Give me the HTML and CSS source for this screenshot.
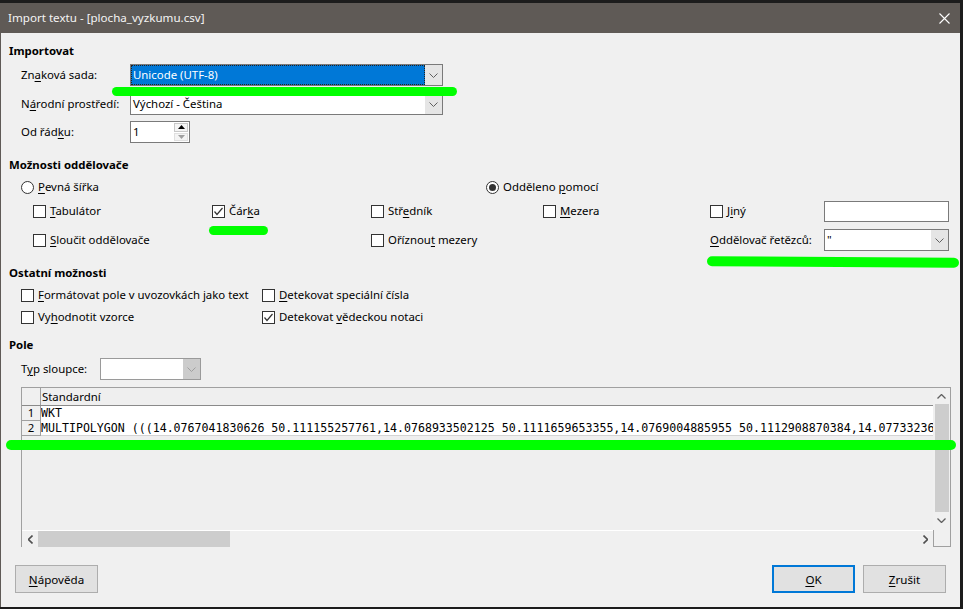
FILE: index.html
```html
<!DOCTYPE html>
<html lang="cs">
<head>
<meta charset="utf-8">
<title>Import textu</title>
<link rel="stylesheet" href="styles.css">
</head>
<body>
<div class="screen">
  <div class="window">
    <div class="titlebar">
      <span class="title">Import textu - [plocha_vyzkumu.csv]</span>
      <svg class="close" width="11" height="11" viewBox="0 0 11 11"><path d="M0.5 0.5 L10.5 10.5 M10.5 0.5 L0.5 10.5" stroke="#ffffff" stroke-width="1.1" fill="none"/></svg>
    </div>
    <div class="content">
      <div class="heading h-import">Importovat</div>
      <div class="field-row r1">
        <span class="flabel">Zn<u>a</u>ková sada:</span>
        <div class="combo combo-wide selected"><span class="combo-text">Unicode (UTF-8)</span><span class="drop"><svg width="9" height="5" viewBox="0 0 9 5"><polyline points="0.5,0.5 4.5,4.5 8.5,0.5" fill="none" stroke="#606060"/></svg></span></div>
      </div>
      <div class="field-row r2">
        <span class="flabel">N<u>á</u>rodní prostředí:</span>
        <div class="combo combo-wide"><span class="combo-text">Výchozí - Čeština</span><span class="drop"><svg width="9" height="5" viewBox="0 0 9 5"><polyline points="0.5,0.5 4.5,4.5 8.5,0.5" fill="none" stroke="#606060"/></svg></span></div>
      </div>
      <div class="field-row r3">
        <span class="flabel">Od řád<u>k</u>u:</span>
        <div class="spin"><span class="spin-text">1</span><span class="spin-btns"><span class="sb up"><svg width="7" height="4" viewBox="0 0 7 4"><polygon points="0,4 3.5,0 7,4" fill="#000"/></svg></span><span class="sb down"><svg width="7" height="4" viewBox="0 0 7 4"><polygon points="0,0 3.5,4 7,0" fill="#a0a0a0"/></svg></span></span></div>
      </div>

      <div class="heading h-sep">Možnosti oddělovače</div>
      <div class="radio-row">
        <label class="opt radio-first"><span class="radio"></span><span><u>P</u>evná šířka</span></label>
        <label class="opt"><span class="radio on"></span><span>Odděleno <u>p</u>omocí</span></label>
      </div>
      <div class="sep-grid sep-row1">
        <label class="opt"><span class="cb"></span><span><u>T</u>abulátor</span></label>
        <label class="opt"><span class="cb on"><svg width="11" height="11" viewBox="0 0 11 11"><polyline points="1.5,5.5 4,8.5 9.5,2" fill="none" stroke="#333" stroke-width="1.2"/></svg></span><span>Čár<u>k</u>a</span></label>
        <label class="opt"><span class="cb"></span><span>Stř<u>e</u>dník</span></label>
        <label class="opt"><span class="cb"></span><span><u>M</u>ezera</span></label>
        <label class="opt"><span class="cb"></span><span>J<u>i</u>ný</span></label>
        <div class="textbox"></div>
      </div>
      <div class="sep-grid sep-row2">
        <label class="opt"><span class="cb"></span><span><u>S</u>loučit oddělovače</span></label>
        <span></span>
        <label class="opt span2"><span class="cb"></span><span>Oříznou<u>t</u> mezery</span></label>
        <span class="flabel2"><u>O</u>ddělovač řetězců:</span>
        <div class="combo combo-small"><span class="combo-text">"</span><span class="drop"><svg width="9" height="5" viewBox="0 0 9 5"><polyline points="0.5,0.5 4.5,4.5 8.5,0.5" fill="none" stroke="#606060"/></svg></span></div>
      </div>

      <div class="heading h-other">Ostatní možnosti</div>
      <div class="other-grid o1">
        <label class="opt"><span class="cb"></span><span><u>F</u>ormátovat pole v uvozovkách jako text</span></label>
        <label class="opt"><span class="cb"></span><span><u>D</u>etekovat speciální čísla</span></label>
      </div>
      <div class="other-grid o2">
        <label class="opt"><span class="cb"></span><span>Vy<u>h</u>odnotit vzorce</span></label>
        <label class="opt"><span class="cb on"><svg width="11" height="11" viewBox="0 0 11 11"><polyline points="1.5,5.5 4,8.5 9.5,2" fill="none" stroke="#333" stroke-width="1.2"/></svg></span><span>Detekovat <u>v</u>ědeckou notaci</span></label>
      </div>

      <div class="heading h-pole">Pole</div>
      <div class="field-row r-typ">
        <span class="flabel-typ">T<u>y</u>p sloupce:</span>
        <div class="combo combo-typ disabled"><span class="combo-text"></span><span class="drop"><svg width="9" height="5" viewBox="0 0 9 5"><polyline points="0.5,0.5 4.5,4.5 8.5,0.5" fill="none" stroke="#a0a0a0"/></svg></span></div>
      </div>

      <div class="preview">
        <div class="table">
          <div class="trow thead"><div class="rh"></div><div class="cell">Standardní</div></div>
          <div class="trow tr1"><div class="rh">1</div><div class="cell mono">WKT</div></div>
          <div class="trow tr2"><div class="rh">2</div><div class="cell mono">MULTIPOLYGON (((14.0767041830626 50.111155257761,14.0768933502125 50.1111659653355,14.0769004885955 50.1112908870384,14.07733236</div></div>
        </div>
        <div class="vscroll">
          <span class="arr"><svg width="9" height="5" viewBox="0 0 9 5"><polyline points="0.5,4.5 4.5,0.5 8.5,4.5" fill="none" stroke="#606060" stroke-width="1.3"/></svg></span>
          <span class="vthumb"></span>
          <span class="arr"><svg width="9" height="5" viewBox="0 0 9 5"><polyline points="0.5,0.5 4.5,4.5 8.5,0.5" fill="none" stroke="#606060" stroke-width="1.3"/></svg></span>
        </div>
        <div class="hscroll">
          <span class="harr"><svg width="5" height="9" viewBox="0 0 5 9"><polyline points="4.5,0.5 0.5,4.5 4.5,8.5" fill="none" stroke="#505050" stroke-width="1.6"/></svg></span>
          <span class="hthumb"></span>
          <span class="harr right"><svg width="5" height="9" viewBox="0 0 5 9"><polyline points="0.5,0.5 4.5,4.5 0.5,8.5" fill="none" stroke="#505050" stroke-width="1.6"/></svg></span>
        </div>
        <div class="corner"></div>
      </div>

      <div class="buttons">
        <button class="btn"><u>N</u>ápověda</button>
        <div class="btn-group">
          <button class="btn btn-default"><u>O</u>K</button>
          <button class="btn"><u>Z</u>rušit</button>
        </div>
      </div>
    </div>

    <span class="mark mark1"></span>
    <span class="mark mark2"></span>
    <span class="mark mark3"></span>
    <span class="mark mark4"></span>
  </div>
</div>
</body>
</html>
```

FILE: styles.css
```css
* { box-sizing: border-box; margin: 0; padding: 0; }
html, body { width: 963px; height: 609px; overflow: hidden; }
body {
  background: #1c1c1c;
  font-family: "Noto Sans", "Open Sans", sans-serif;
  font-size: 11.4px;
  color: #000;
}
u { text-decoration: underline; text-underline-offset: 2px; }

.screen { padding-top: 3px; }

.window {
  position: relative;
  width: 960px;
  height: 604px;
  background: #f0f0f0;
  border-left: 1px solid #5f5a56;
  display: flex;
  flex-direction: column;
}

.titlebar {
  height: 30px;
  flex: none;
  background: #5f5a56;
  color: #f4f4f4;
  display: flex;
  align-items: center;
  padding-left: 8px;
  margin-left: -1px;
  font-size: 11.6px;
}
.title { line-height: 16px; }
.close { margin-left: auto; margin-right: 10px; }

.content {
  padding: 10px 0 0 8px;
  display: flex;
  flex-direction: column;
}

.heading { height: 16px; line-height: 16px; font-weight: bold; }
.h-import { margin-top: 0; }
.h-sep { margin-top: 14px; }
.h-other { margin-top: 14px; }
.h-pole { margin-top: 12px; }

.field-row {
  height: 22px;
  display: flex;
  align-items: center;
  padding-left: 12px;
}
.r1 { margin-top: 5px; }
.r2 { margin-top: 7px; }
.r3 { margin-top: 6px; }
.r-typ { margin-top: 5px; }

.flabel { width: 109px; line-height: 16px; }
.flabel-typ { width: 79px; line-height: 16px; }

.combo {
  height: 22px;
  border: 1px solid #7a7a7a;
  background: #fff;
  display: flex;
}
.combo-wide { width: 313px; }
.combo-small { width: 125px; }
.combo-typ { width: 101px; }
.combo-text {
  flex: 1;
  line-height: 20px;
  padding-left: 2px;
  white-space: nowrap;
  overflow: hidden;
}
.selected .combo-text {
  background: #0078d7;
  color: #fff;
  outline: 1px dotted #222;
  outline-offset: -1px;
}
.drop {
  width: 17px;
  flex: none;
  background: #e5e5e5;
  display: flex;
  align-items: center;
  justify-content: center;
}
.disabled .drop { background: #cccccc; }
.disabled { border-color: #9a9a9a; }

.spin {
  width: 60px;
  height: 22px;
  border: 1px solid #7a7a7a;
  background: #fff;
  display: flex;
}
.spin-text { flex: 1; line-height: 20px; padding-left: 2px; }
.spin-btns {
  width: 15px;
  flex: none;
  display: flex;
  flex-direction: column;
  padding: 1px 1px 1px 0;
  gap: 1px;
}
.sb {
  flex: 1;
  background: #f4f4f4;
  border: 1px solid #c8c8c8;
  display: flex;
  align-items: center;
  justify-content: center;
}
.sb.down { border-color: #e0e0e0; }

.opt {
  display: flex;
  align-items: center;
  gap: 4px;
  line-height: 16px;
  white-space: nowrap;
}
.cb {
  width: 13px;
  height: 13px;
  flex: none;
  border: 1px solid #333;
  background: #fff;
  display: flex;
  align-items: center;
  justify-content: center;
}
.radio {
  width: 13px;
  height: 13px;
  flex: none;
  border: 1px solid #333;
  border-radius: 50%;
  background: #fff;
  position: relative;
}
.radio.on::after {
  content: "";
  position: absolute;
  left: 2px;
  top: 2px;
  width: 7px;
  height: 7px;
  border-radius: 50%;
  background: #333;
}

.radio-row {
  margin-top: 6px;
  height: 16px;
  display: flex;
  padding-left: 12px;
}
.radio-first { width: 465px; }

.sep-grid {
  height: 22px;
  display: grid;
  grid-template-columns: 179px 159px 172px 167px 114px 125px;
  align-items: center;
  padding-left: 24px;
}
.sep-row1 { margin-top: 5px; }
.sep-row2 { margin-top: 7px; }
.span2 { grid-column: span 2; }
.flabel2 { line-height: 16px; }
.textbox {
  height: 21px;
  border: 1px solid #7a7a7a;
  background: #fff;
}

.other-grid {
  height: 16px;
  display: grid;
  grid-template-columns: 241px auto;
  padding-left: 12px;
  margin-top: 6px;
}

.preview {
  margin-top: 7px;
  margin-left: 12px;
  width: 930px;
  height: 160px;
  border-top: 1px solid #a0a0a0;
  border-left: 1px solid #a0a0a0;
  border-right: 1px solid #a0a0a0;
  display: grid;
  grid-template-columns: 1fr 17px;
  grid-template-rows: 1fr 17px;
  background: #efefef;
}
.table { overflow: hidden; }
.trow { display: flex; }
.rh {
  width: 19px;
  flex: none;
  border-right: 1px solid #a0a0a0;
  text-align: center;
  background: #f0f0f0;
}
.cell { flex: 1; white-space: nowrap; overflow: hidden; padding-left: 1px; }
.thead { height: 18px; border-bottom: 1px solid #8a8a8a; line-height: 17px; }
.tr1, .tr2 { height: 15px; }
.tr1 .rh, .tr2 .rh {
  height: 15px;
  line-height: 14px;
  border-bottom: 1px solid #a0a0a0;
  font-size: 11.4px;
  overflow: hidden;
}
.tr1 .cell, .tr2 .cell { background: #fff; line-height: 15px; }
.tr2 .cell { border-bottom: 1px solid #d4d4d4; line-height: 14px; }
.mono {
  font-family: "DejaVu Sans Mono", "Liberation Mono", monospace;
  font-size: 11.6px;
  padding-left: 0;
}

.vscroll {
  background: #f0f0f0;
  display: flex;
  flex-direction: column;
  align-items: center;
}
.vscroll .arr { height: 16px; display: flex; align-items: center; justify-content: center; }
.vthumb { width: 14px; height: 108px; background: #cdcdcd; }
.vscroll .arr:last-child { margin-top: auto; margin-bottom: 2px; }

.hscroll {
  border-top: 1px solid #ffffff;
  background: #f0f0f0;
  display: flex;
  align-items: stretch;
}
.harr { width: 16px; flex: none; display: flex; align-items: center; justify-content: center; }
.hthumb { width: 192px; background: #cdcdcd; }
.harr.right { margin-left: auto; }
.corner {
  border-left: 1px solid #a0a0a0;
  border-bottom: 1px solid #a0a0a0;
  background: #f0f0f0;
}

.buttons {
  margin-top: 18px;
  margin-left: 6px;
  width: 931px;
  display: flex;
  justify-content: space-between;
}
.btn-group { display: flex; gap: 8px; }
.btn {
  width: 83px;
  height: 28px;
  border: 1px solid #adadad;
  background: #e1e1e1;
  font-family: inherit;
  font-size: 11.6px;
  color: #000;
}
.btn-default { border: 2px solid #0078d7; }

.mark {
  position: absolute;
  background: #00ff00;
  border-radius: 6px;
}
.mark1 { left: 111px; top: 84px; width: 345px; height: 9px; }
.mark2 { left: 208px; top: 223px; width: 59px; height: 9px; }
.mark3 { left: 706px; top: 254px; width: 252px; height: 10px; transform: rotate(0.35deg); }
.mark4 { left: 5px; top: 437px; width: 950px; height: 10px; }
```
